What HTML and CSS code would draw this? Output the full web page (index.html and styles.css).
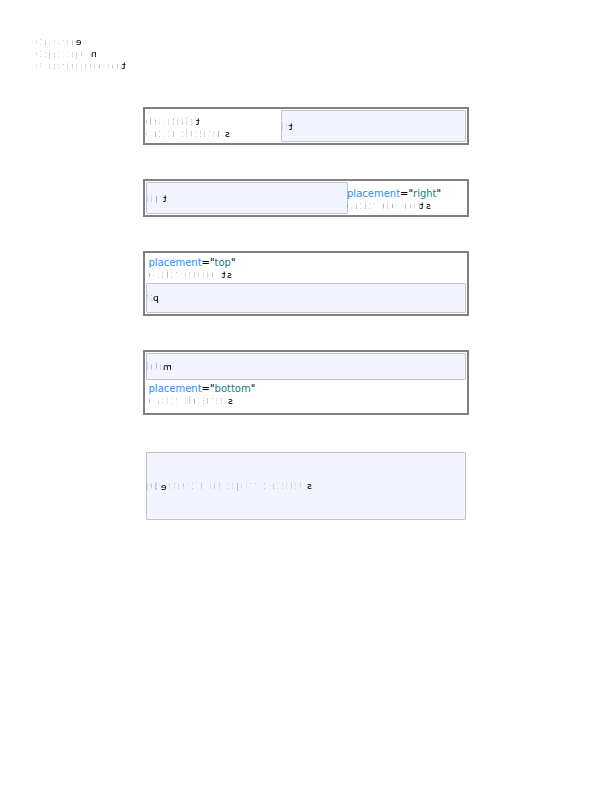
FILE: index.html
```
<!DOCTYPE html>
<html lang="en"><head><meta charset="utf-8"><title>Caption placement</title><link rel="stylesheet" href="styles.css"></head>
<body>
<header class="intro">
<p><span class="faint snug">Class:nod</span><b>e</b></p>
<p><span class="faint">Object:captio</span><b>n</b></p>
<p><span class="faint">Properties:placemen</span><b>t</b></p>
</header>
<main>
<section class="table left"><div class="caption"><p><span class="faint snug">default is lef</span><b>t</b></p><p><span class="faint">caption placement</span><b>s</b></p></div><div class="cell"><p><span class="faint tight">lef</span><b>t</b></p></div></section>
<section class="table right"><div class="cell"><p><span class="faint snug">righ</span><b>t</b></p></div><div class="caption"><p class="code"><i>placement</i>="<em>right</em>"</p><p class="pair"><span class="faint snug">caption placemen</span><b>t</b> <b>s</b></p></div></section>
<section class="table top"><div class="caption"><p class="code"><i>placement</i>="<em>top</em>"</p><p class="pair"><span class="faint snug">caption placemen</span><b>t</b> <b>s</b></p></div><div class="cell"><p><span class="faint tight">to</span><b>p</b></p></div></section>
<section class="table bottom"><div class="cell"><p><span class="faint tight">botto</span><b>m</b></p></div><div class="caption"><p class="code"><i>placement</i>="<em>bottom</em>"</p><p><span class="faint">caption placement</span><b>s</b></p></div></section>
<section class="cell inline"><p class="long"><span class="faint">placement:'inline',caption placement</span><b>s</b></p><p class="over"><span class="faint">inlin</span><b>e</b></p></section>
</main>
</body></html>
```
FILE: styles.css
```
* { box-sizing: border-box; }
body { margin: 0; background: #fff; color: #000; font: 10px/12px "Liberation Sans", sans-serif; }
p { margin: 0; white-space: nowrap; }
.intro { padding: 36px 0 0 36px; height: 107px; font-size: 9.6px; }
main { width: 326px; margin-left: 143px; }
.faint { letter-spacing: -.1px; color: transparent; background: repeating-linear-gradient(90deg, rgba(0,0,0,.34) 0 1px, transparent 1px 4px, rgba(0,0,0,.25) 4px 5px, transparent 5px 9px); -webkit-background-clip: text; background-clip: text; }
.faint.snug { letter-spacing: -.27px; }
.faint.tight { letter-spacing: -1.2px; }
b { display: inline-block; transform: scaleX(-1); font-weight: 400; font-family: "DejaVu Sans", sans-serif; font-size: 9px; -webkit-text-stroke: .1px #000; }
.table { display: flex; border: 2px solid #808080; padding: 1px; margin-bottom: 34px; }
.cell { background: #f1f4ff; border: 1px solid #c3c4ce; border-radius: 1px; display: flex; align-items: center; }
.left, .right { height: 38px; align-items: stretch; }
.left .caption { width: 135px; padding-top: 6px; }
.left .cell { flex: 1; }
.right .cell { width: 202px; }
.right .caption { padding-top: 6px; margin-left: -1px; }
.left .cell p, .right .cell p { padding-top: 1px; }
.code { font-family: "DejaVu Sans", sans-serif; }
.code i { color: #1e90ff; font-style: normal; }
.code em { color: #138080; font-style: normal; }
.top, .bottom { flex-direction: column; height: 65px; }
.top .cell { height: 30px; margin-top: auto; }
.bottom .cell { height: 27px; }
.top .caption, .bottom .caption { padding: 3px 2.5px 0; }
.pair { word-spacing: -.8px; }
.inline { position: relative; height: 68px; margin: 37px 3px 0; }
.long .faint { letter-spacing: 0; }
.inline .faint { opacity: .8; }
.inline .over .faint { letter-spacing: -.5px; }
.over { position: absolute; left: -1px; top: 28px; }
```
